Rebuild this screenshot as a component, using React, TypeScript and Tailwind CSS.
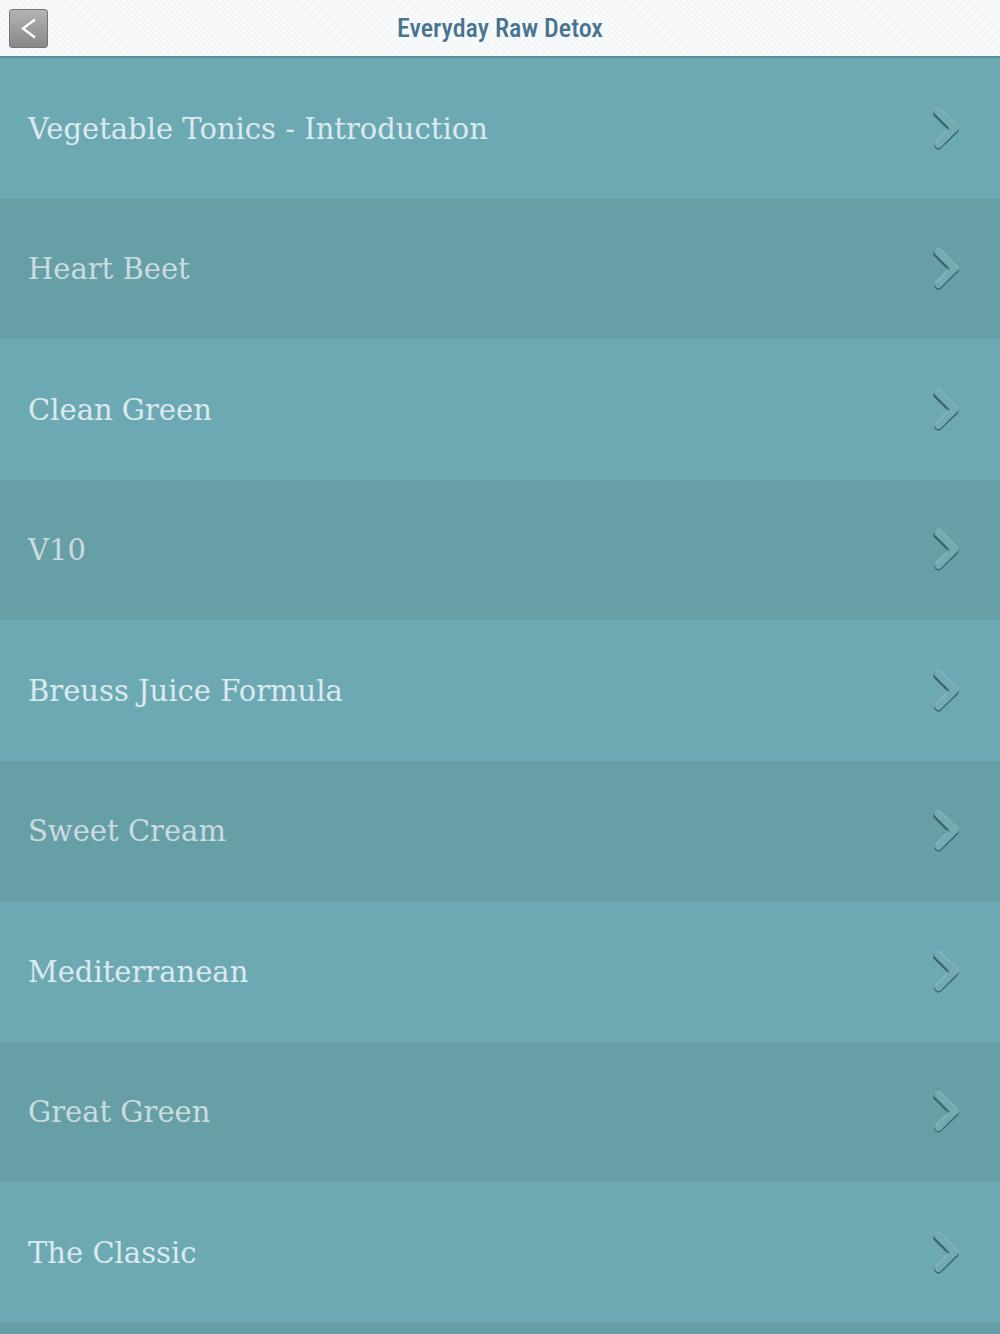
const recipes = [
  "Vegetable Tonics - Introduction",
  "Heart Beet",
  "Clean Green",
  "V10",
  "Breuss Juice Formula",
  "Sweet Cream",
  "Mediterranean",
  "Great Green",
  "The Classic",
];

function BevelChevron() {
  return (
    <svg
      viewBox="0 0 30 44"
      className="h-11 w-[30px] shrink-0"
      fill="none"
      strokeLinecap="round"
      strokeLinejoin="round"
      aria-hidden="true"
    >
      <path d="M5.5 6.5 L22.5 23 L6.5 38.5" stroke="#36626c" strokeWidth="8" />
      <path d="M6.5 4.5 L23 21" stroke="#8ab9c0" strokeWidth="7" />
      <path d="M6 5.5 L22.5 21.5 L6.5 37.5" stroke="#74abb3" strokeWidth="7" />
      <path d="M2.5 8 L14.5 20" stroke="#36626c" strokeWidth="2" />
      <path d="M14.5 24.5 L4 35" stroke="#86b7be" strokeWidth="1.5" />
    </svg>
  );
}

export default function App() {
  return (
    <div className="min-h-screen bg-[#669fa6]">
      <header className="grid h-[58px] grid-cols-[1fr_auto_1fr] items-center border-b-2 border-[#568f96] bg-[#f7f9fb] bg-[repeating-linear-gradient(45deg,#f2f6f8_0px,#f2f6f8_1px,transparent_1px,transparent_4px)] px-[9px]">
        <button
          type="button"
          aria-label="Back"
          className="flex size-[39px] items-center justify-center rounded-[3px] border border-[#777] bg-linear-to-b from-[#b4b4b4] to-[#888]"
        >
          <svg viewBox="0 0 37 37" className="size-[37px]" fill="none" aria-hidden="true">
            <path d="M25 9.5 L13 18.5 L25 27.5" stroke="#fff" strokeWidth="2.4" />
          </svg>
        </button>
        <h1 className="font-['Roboto_Condensed','Roboto',sans-serif] text-[26px] leading-8 font-medium text-[#467491]">
          Everyday Raw Detox
        </h1>
      </header>
      <ul>
        {recipes.map((name) => (
          <li
            key={name}
            className="text-[#dbeaf0] odd:h-[141px] odd:bg-[#6da9b2] even:h-[140px] even:bg-[#669fa6] even:text-[#cbdce0]"
          >
            <a href="#" className="flex h-full items-center justify-between pr-[38px] pl-7">
              <span className="font-['DejaVu_Serif',serif] text-[29px] leading-9">{name}</span>
              <BevelChevron />
            </a>
          </li>
        ))}
      </ul>
    </div>
  );
}
